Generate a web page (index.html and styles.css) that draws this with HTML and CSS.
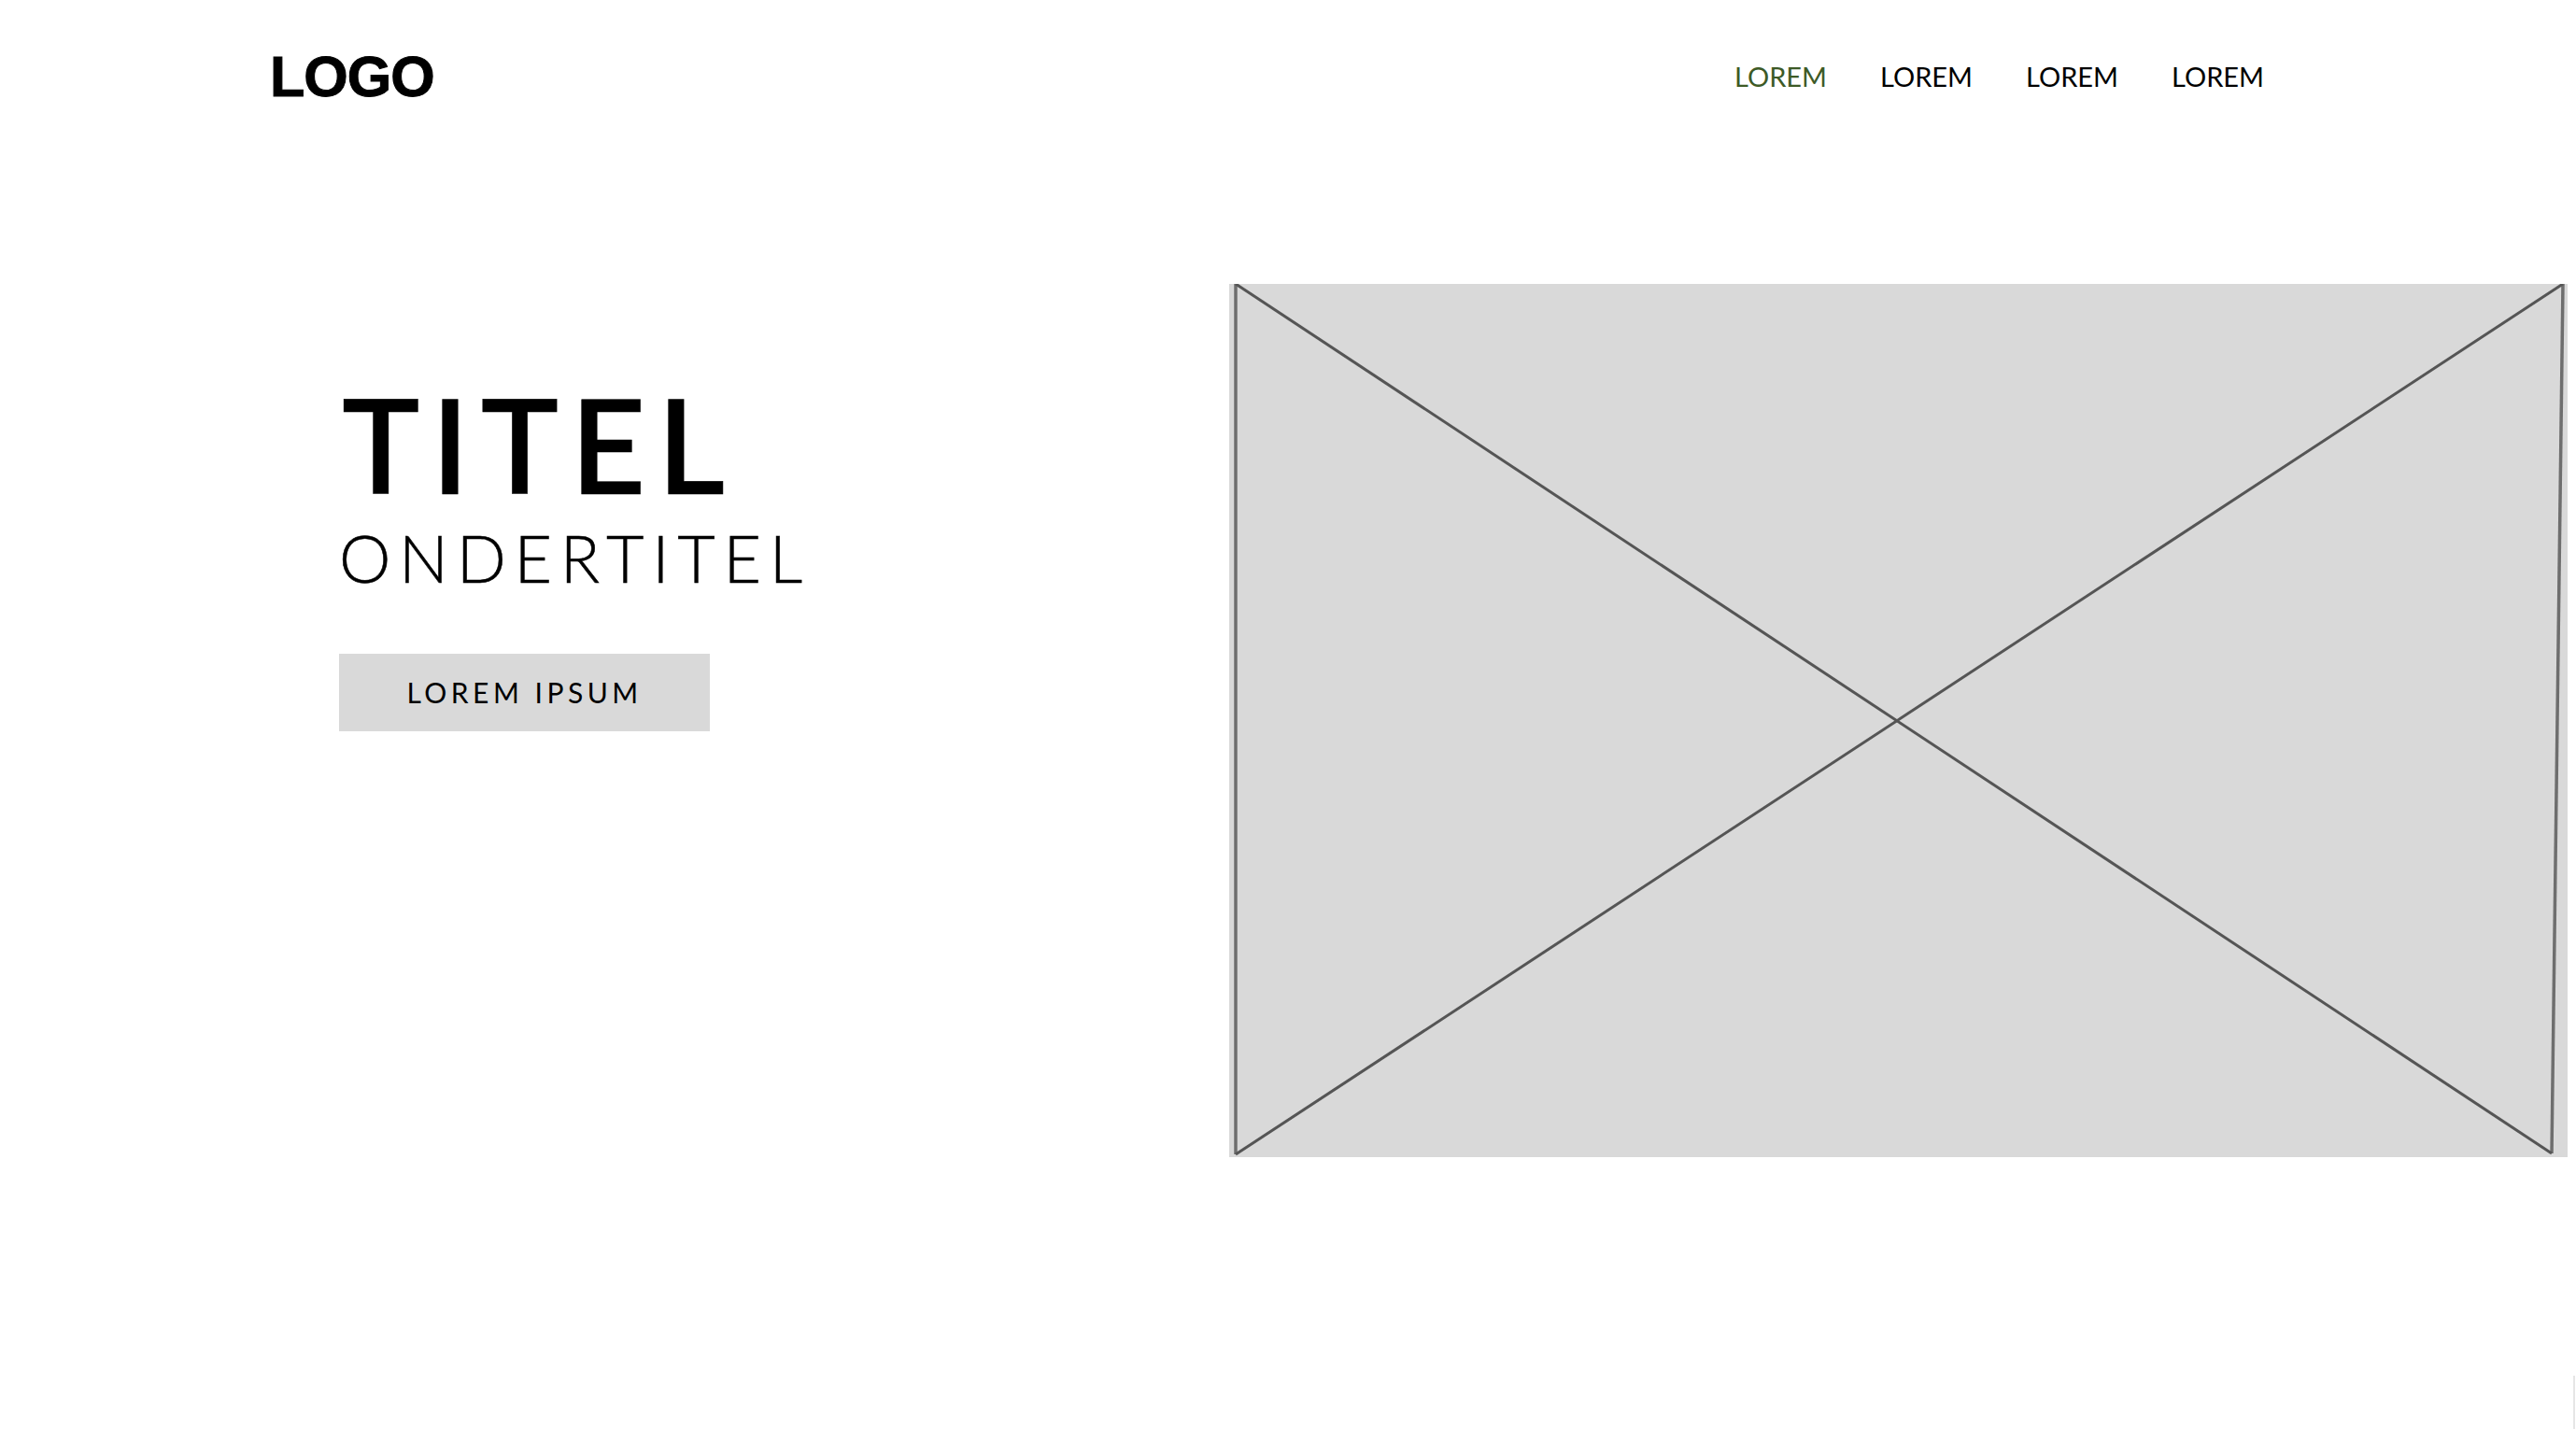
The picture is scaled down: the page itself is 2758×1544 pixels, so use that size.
FILE: index.html
```html
<!DOCTYPE html>
<html lang="en">
<head>
    <meta charset="UTF-8">
    <meta name="viewport" content="width=device-width, initial-scale=1.0">
    <title>Wireframe</title>
    <link rel="stylesheet" href="styles.css">
</head>
<body>
<div class="page">
    <header class="header">
        <div class="logo">LOGO</div>
        <nav class="nav">
            <a class="nav-link active" href="#">LOREM</a>
            <a class="nav-link" href="#">LOREM</a>
            <a class="nav-link" href="#">LOREM</a>
            <a class="nav-link" href="#">LOREM</a>
        </nav>
    </header>

    <main class="hero">
        <div class="hero-text">
            <h1 class="title">TITEL</h1>
            <h2 class="subtitle">ONDERTITEL</h2>
            <a class="button" href="#">LOREM IPSUM</a>
        </div>
        <div class="placeholder">
            <svg class="placeholder-lines" width="1433" height="935" viewBox="0 0 1433 935">
                <path class="line-side" d="M7 0 L7 932"></path>
                <path class="line-side" d="M1428 0 L1416 931"></path>
                <path class="line-cross" d="M7 0 L1416 931"></path>
                <path class="line-cross" d="M1428 0 L7 932"></path>
            </svg>
        </div>
    </main>
    <div class="scroll-edge"></div>
</div>
</body>
</html>
```

FILE: styles.css
```css
html, body {
    margin: 0;
    background-color: #fff;
}
.page {
    position: relative;
    height: 1544px;
    overflow: hidden;
    font-family: Lato, Arial, sans-serif;
    color: #000;
}
.header {
    display: flex;
    justify-content: space-between;
    align-items: center;
    height: 164px;
    padding: 0 334px 0 289px;
}
.logo {
    font-family: "Liberation Sans", Arial, sans-serif;
    font-weight: bold;
    font-size: 61px;
    letter-spacing: -1px;
    -webkit-text-stroke: 1px #000;
    filter: blur(0.7px);
}
.nav {
    display: flex;
    gap: 57px;
    padding-bottom: 2px;
}
.nav-link {
    font-size: 29px;
    color: #000;
    text-decoration: none;
}
.nav-link.active {
    color: #3d5a26;
}
.hero {
    display: flex;
    justify-content: space-between;
    align-items: flex-start;
    padding: 140px 9px 0 363px;
}
.hero-text {
    padding-top: 101px;
}
.title {
    margin: 0 0 0 3px;
    font-family: "Lato Semibold", "Lato Medium", Lato, Arial, sans-serif;
    font-size: 140px;
    line-height: 1;
    font-weight: 600;
    letter-spacing: 12.5px;
    -webkit-text-stroke: 0.5px #000;
}
.subtitle {
    margin: 17px 0 0;
    font-size: 70px;
    line-height: 1;
    font-weight: 300;
    letter-spacing: 8.7px;
    -webkit-text-stroke: 0.5px #000;
}
.button {
    display: block;
    width: 397px;
    margin-top: 68px;
    padding: 26px 0;
    line-height: 31px;
    background-color: #d9d9d9;
    font-size: 30px;
    letter-spacing: 4.5px;
    text-align: center;
    color: #000;
    text-decoration: none;
}
.placeholder {
    width: 1433px;
    height: 935px;
    background-color: #d9d9d9;
}
.placeholder-lines {
    display: block;
}
.line-cross {
    fill: none;
    stroke: #555;
    stroke-width: 3;
}
.line-side {
    fill: none;
    stroke: #6e6e6e;
    stroke-width: 3.5;
}
.scroll-edge {
    position: absolute;
    right: 1px;
    top: 1473px;
    width: 2px;
    height: 57px;
    background-color: #e6e6e6;
}
```
